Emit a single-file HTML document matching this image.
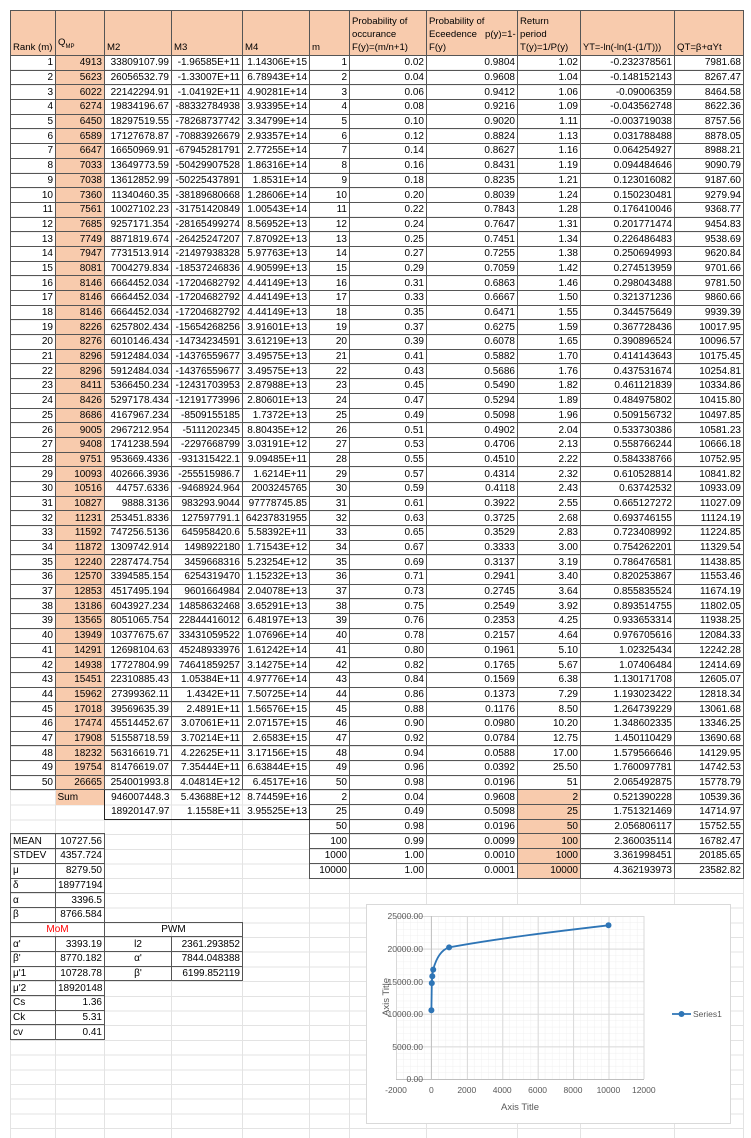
<!DOCTYPE html>
<html><head><meta charset="utf-8"><style>
*{margin:0;padding:0;box-sizing:border-box}
body{width:751px;height:1138px;overflow:hidden;background:#fff;position:relative;font-family:"Liberation Sans",sans-serif;font-size:10px;color:#000}
.gl{position:absolute;left:10px;top:55px;width:733px;height:1083px;background:repeating-linear-gradient(to bottom,#e3e3e3 0,#e3e3e3 1px,transparent 1px,transparent 14.7px)}
.vl{position:absolute;top:10px;height:1128px;width:1px;background:#e3e3e3}
table{position:absolute;left:10px;top:10px;border-collapse:collapse;table-layout:fixed;width:733px}
td{border:none;padding:0 2px;height:14.7px;line-height:13px;white-space:nowrap;overflow:hidden;text-align:right;background:transparent}
td:nth-child(6){text-align:right}
tr.h td{height:45px;vertical-align:bottom;text-align:left;background:#f8cbad;border:1px solid #555;line-height:13px;white-space:nowrap;padding:0 1px 1px 2px;font-size:9.6px}
.b td,td.b{border:1px solid #555}
.p{background:#f8cbad}
.l{text-align:left}
.c{text-align:center}
</style></head><body>
<div class="gl"></div>
<div class="vl" style="left:10px"></div><div class="vl" style="left:55px"></div><div class="vl" style="left:104px"></div><div class="vl" style="left:171px"></div><div class="vl" style="left:242px"></div><div class="vl" style="left:309px"></div><div class="vl" style="left:349px"></div><div class="vl" style="left:426px"></div><div class="vl" style="left:517px"></div><div class="vl" style="left:580px"></div><div class="vl" style="left:674px"></div><div class="vl" style="left:743px"></div>
<table>
<colgroup><col style="width:45px"><col style="width:49px"><col style="width:67px"><col style="width:71px"><col style="width:67px"><col style="width:40px"><col style="width:77px"><col style="width:91px"><col style="width:63px"><col style="width:94px"><col style="width:69px"></colgroup>
<tr class="h"><td>Rank (m)</td><td>Q<sub style="font-size:6px">MP</sub></td><td>M2</td><td>M3</td><td>M4</td><td>m</td><td>Probability of<br>occurance<br>F(y)=(m/n+1)</td><td>Probability of<br>Eceedence&nbsp;&nbsp; p(y)=1-<br>F(y)</td><td>Return<br>period<br>T(y)=1/P(y)</td><td style="font-size:9.3px">YT=-ln(-ln(1-(1/T)))</td><td>QT=β+αYt</td></tr>
<tr class="b"><td>1</td><td class="p">4913</td><td>33809107.99</td><td>-1.96585E+11</td><td>1.14306E+15</td><td>1</td><td>0.02</td><td>0.9804</td><td>1.02</td><td>-0.232378561</td><td>7981.68</td></tr>
<tr class="b"><td>2</td><td class="p">5623</td><td>26056532.79</td><td>-1.33007E+11</td><td>6.78943E+14</td><td>2</td><td>0.04</td><td>0.9608</td><td>1.04</td><td>-0.148152143</td><td>8267.47</td></tr>
<tr class="b"><td>3</td><td class="p">6022</td><td>22142294.91</td><td>-1.04192E+11</td><td>4.90281E+14</td><td>3</td><td>0.06</td><td>0.9412</td><td>1.06</td><td>-0.09006359</td><td>8464.58</td></tr>
<tr class="b"><td>4</td><td class="p">6274</td><td>19834196.67</td><td>-88332784938</td><td>3.93395E+14</td><td>4</td><td>0.08</td><td>0.9216</td><td>1.09</td><td>-0.043562748</td><td>8622.36</td></tr>
<tr class="b"><td>5</td><td class="p">6450</td><td>18297519.55</td><td>-78268737742</td><td>3.34799E+14</td><td>5</td><td>0.10</td><td>0.9020</td><td>1.11</td><td>-0.003719038</td><td>8757.56</td></tr>
<tr class="b"><td>6</td><td class="p">6589</td><td>17127678.87</td><td>-70883926679</td><td>2.93357E+14</td><td>6</td><td>0.12</td><td>0.8824</td><td>1.13</td><td>0.031788488</td><td>8878.05</td></tr>
<tr class="b"><td>7</td><td class="p">6647</td><td>16650969.91</td><td>-67945281791</td><td>2.77255E+14</td><td>7</td><td>0.14</td><td>0.8627</td><td>1.16</td><td>0.064254927</td><td>8988.21</td></tr>
<tr class="b"><td>8</td><td class="p">7033</td><td>13649773.59</td><td>-50429907528</td><td>1.86316E+14</td><td>8</td><td>0.16</td><td>0.8431</td><td>1.19</td><td>0.094484646</td><td>9090.79</td></tr>
<tr class="b"><td>9</td><td class="p">7038</td><td>13612852.99</td><td>-50225437891</td><td>1.8531E+14</td><td>9</td><td>0.18</td><td>0.8235</td><td>1.21</td><td>0.123016082</td><td>9187.60</td></tr>
<tr class="b"><td>10</td><td class="p">7360</td><td>11340460.35</td><td>-38189680668</td><td>1.28606E+14</td><td>10</td><td>0.20</td><td>0.8039</td><td>1.24</td><td>0.150230481</td><td>9279.94</td></tr>
<tr class="b"><td>11</td><td class="p">7561</td><td>10027102.23</td><td>-31751420849</td><td>1.00543E+14</td><td>11</td><td>0.22</td><td>0.7843</td><td>1.28</td><td>0.176410046</td><td>9368.77</td></tr>
<tr class="b"><td>12</td><td class="p">7685</td><td>9257171.354</td><td>-28165499274</td><td>8.56952E+13</td><td>12</td><td>0.24</td><td>0.7647</td><td>1.31</td><td>0.201771474</td><td>9454.83</td></tr>
<tr class="b"><td>13</td><td class="p">7749</td><td>8871819.674</td><td>-26425247207</td><td>7.87092E+13</td><td>13</td><td>0.25</td><td>0.7451</td><td>1.34</td><td>0.226486483</td><td>9538.69</td></tr>
<tr class="b"><td>14</td><td class="p">7947</td><td>7731513.914</td><td>-21497938328</td><td>5.97763E+13</td><td>14</td><td>0.27</td><td>0.7255</td><td>1.38</td><td>0.250694993</td><td>9620.84</td></tr>
<tr class="b"><td>15</td><td class="p">8081</td><td>7004279.834</td><td>-18537246836</td><td>4.90599E+13</td><td>15</td><td>0.29</td><td>0.7059</td><td>1.42</td><td>0.274513959</td><td>9701.66</td></tr>
<tr class="b"><td>16</td><td class="p">8146</td><td>6664452.034</td><td>-17204682792</td><td>4.44149E+13</td><td>16</td><td>0.31</td><td>0.6863</td><td>1.46</td><td>0.298043488</td><td>9781.50</td></tr>
<tr class="b"><td>17</td><td class="p">8146</td><td>6664452.034</td><td>-17204682792</td><td>4.44149E+13</td><td>17</td><td>0.33</td><td>0.6667</td><td>1.50</td><td>0.321371236</td><td>9860.66</td></tr>
<tr class="b"><td>18</td><td class="p">8146</td><td>6664452.034</td><td>-17204682792</td><td>4.44149E+13</td><td>18</td><td>0.35</td><td>0.6471</td><td>1.55</td><td>0.344575649</td><td>9939.39</td></tr>
<tr class="b"><td>19</td><td class="p">8226</td><td>6257802.434</td><td>-15654268256</td><td>3.91601E+13</td><td>19</td><td>0.37</td><td>0.6275</td><td>1.59</td><td>0.367728436</td><td>10017.95</td></tr>
<tr class="b"><td>20</td><td class="p">8276</td><td>6010146.434</td><td>-14734234591</td><td>3.61219E+13</td><td>20</td><td>0.39</td><td>0.6078</td><td>1.65</td><td>0.390896524</td><td>10096.57</td></tr>
<tr class="b"><td>21</td><td class="p">8296</td><td>5912484.034</td><td>-14376559677</td><td>3.49575E+13</td><td>21</td><td>0.41</td><td>0.5882</td><td>1.70</td><td>0.414143643</td><td>10175.45</td></tr>
<tr class="b"><td>22</td><td class="p">8296</td><td>5912484.034</td><td>-14376559677</td><td>3.49575E+13</td><td>22</td><td>0.43</td><td>0.5686</td><td>1.76</td><td>0.437531674</td><td>10254.81</td></tr>
<tr class="b"><td>23</td><td class="p">8411</td><td>5366450.234</td><td>-12431703953</td><td>2.87988E+13</td><td>23</td><td>0.45</td><td>0.5490</td><td>1.82</td><td>0.461121839</td><td>10334.86</td></tr>
<tr class="b"><td>24</td><td class="p">8426</td><td>5297178.434</td><td>-12191773996</td><td>2.80601E+13</td><td>24</td><td>0.47</td><td>0.5294</td><td>1.89</td><td>0.484975802</td><td>10415.80</td></tr>
<tr class="b"><td>25</td><td class="p">8686</td><td>4167967.234</td><td>-8509155185</td><td>1.7372E+13</td><td>25</td><td>0.49</td><td>0.5098</td><td>1.96</td><td>0.509156732</td><td>10497.85</td></tr>
<tr class="b"><td>26</td><td class="p">9005</td><td>2967212.954</td><td>-5111202345</td><td>8.80435E+12</td><td>26</td><td>0.51</td><td>0.4902</td><td>2.04</td><td>0.533730386</td><td>10581.23</td></tr>
<tr class="b"><td>27</td><td class="p">9408</td><td>1741238.594</td><td>-2297668799</td><td>3.03191E+12</td><td>27</td><td>0.53</td><td>0.4706</td><td>2.13</td><td>0.558766244</td><td>10666.18</td></tr>
<tr class="b"><td>28</td><td class="p">9751</td><td>953669.4336</td><td>-931315422.1</td><td>9.09485E+11</td><td>28</td><td>0.55</td><td>0.4510</td><td>2.22</td><td>0.584338766</td><td>10752.95</td></tr>
<tr class="b"><td>29</td><td class="p">10093</td><td>402666.3936</td><td>-255515986.7</td><td>1.6214E+11</td><td>29</td><td>0.57</td><td>0.4314</td><td>2.32</td><td>0.610528814</td><td>10841.82</td></tr>
<tr class="b"><td>30</td><td class="p">10516</td><td>44757.6336</td><td>-9468924.964</td><td>2003245765</td><td>30</td><td>0.59</td><td>0.4118</td><td>2.43</td><td>0.63742532</td><td>10933.09</td></tr>
<tr class="b"><td>31</td><td class="p">10827</td><td>9888.3136</td><td>983293.9044</td><td>97778745.85</td><td>31</td><td>0.61</td><td>0.3922</td><td>2.55</td><td>0.665127272</td><td>11027.09</td></tr>
<tr class="b"><td>32</td><td class="p">11231</td><td>253451.8336</td><td>127597791.1</td><td>64237831955</td><td>32</td><td>0.63</td><td>0.3725</td><td>2.68</td><td>0.693746155</td><td>11124.19</td></tr>
<tr class="b"><td>33</td><td class="p">11592</td><td>747256.5136</td><td>645958420.6</td><td>5.58392E+11</td><td>33</td><td>0.65</td><td>0.3529</td><td>2.83</td><td>0.723408992</td><td>11224.85</td></tr>
<tr class="b"><td>34</td><td class="p">11872</td><td>1309742.914</td><td>1498922180</td><td>1.71543E+12</td><td>34</td><td>0.67</td><td>0.3333</td><td>3.00</td><td>0.754262201</td><td>11329.54</td></tr>
<tr class="b"><td>35</td><td class="p">12240</td><td>2287474.754</td><td>3459668316</td><td>5.23254E+12</td><td>35</td><td>0.69</td><td>0.3137</td><td>3.19</td><td>0.786476581</td><td>11438.85</td></tr>
<tr class="b"><td>36</td><td class="p">12570</td><td>3394585.154</td><td>6254319470</td><td>1.15232E+13</td><td>36</td><td>0.71</td><td>0.2941</td><td>3.40</td><td>0.820253867</td><td>11553.46</td></tr>
<tr class="b"><td>37</td><td class="p">12853</td><td>4517495.194</td><td>9601664984</td><td>2.04078E+13</td><td>37</td><td>0.73</td><td>0.2745</td><td>3.64</td><td>0.855835524</td><td>11674.19</td></tr>
<tr class="b"><td>38</td><td class="p">13186</td><td>6043927.234</td><td>14858632468</td><td>3.65291E+13</td><td>38</td><td>0.75</td><td>0.2549</td><td>3.92</td><td>0.893514755</td><td>11802.05</td></tr>
<tr class="b"><td>39</td><td class="p">13565</td><td>8051065.754</td><td>22844416012</td><td>6.48197E+13</td><td>39</td><td>0.76</td><td>0.2353</td><td>4.25</td><td>0.933653314</td><td>11938.25</td></tr>
<tr class="b"><td>40</td><td class="p">13949</td><td>10377675.67</td><td>33431059522</td><td>1.07696E+14</td><td>40</td><td>0.78</td><td>0.2157</td><td>4.64</td><td>0.976705616</td><td>12084.33</td></tr>
<tr class="b"><td>41</td><td class="p">14291</td><td>12698104.63</td><td>45248933976</td><td>1.61242E+14</td><td>41</td><td>0.80</td><td>0.1961</td><td>5.10</td><td>1.02325434</td><td>12242.28</td></tr>
<tr class="b"><td>42</td><td class="p">14938</td><td>17727804.99</td><td>74641859257</td><td>3.14275E+14</td><td>42</td><td>0.82</td><td>0.1765</td><td>5.67</td><td>1.07406484</td><td>12414.69</td></tr>
<tr class="b"><td>43</td><td class="p">15451</td><td>22310885.43</td><td>1.05384E+11</td><td>4.97776E+14</td><td>43</td><td>0.84</td><td>0.1569</td><td>6.38</td><td>1.130171708</td><td>12605.07</td></tr>
<tr class="b"><td>44</td><td class="p">15962</td><td>27399362.11</td><td>1.4342E+11</td><td>7.50725E+14</td><td>44</td><td>0.86</td><td>0.1373</td><td>7.29</td><td>1.193023422</td><td>12818.34</td></tr>
<tr class="b"><td>45</td><td class="p">17018</td><td>39569635.39</td><td>2.4891E+11</td><td>1.56576E+15</td><td>45</td><td>0.88</td><td>0.1176</td><td>8.50</td><td>1.264739229</td><td>13061.68</td></tr>
<tr class="b"><td>46</td><td class="p">17474</td><td>45514452.67</td><td>3.07061E+11</td><td>2.07157E+15</td><td>46</td><td>0.90</td><td>0.0980</td><td>10.20</td><td>1.348602335</td><td>13346.25</td></tr>
<tr class="b"><td>47</td><td class="p">17908</td><td>51558718.59</td><td>3.70214E+11</td><td>2.6583E+15</td><td>47</td><td>0.92</td><td>0.0784</td><td>12.75</td><td>1.450110429</td><td>13690.68</td></tr>
<tr class="b"><td>48</td><td class="p">18232</td><td>56316619.71</td><td>4.22625E+11</td><td>3.17156E+15</td><td>48</td><td>0.94</td><td>0.0588</td><td>17.00</td><td>1.579566646</td><td>14129.95</td></tr>
<tr class="b"><td>49</td><td class="p">19754</td><td>81476619.07</td><td>7.35444E+11</td><td>6.63844E+15</td><td>49</td><td>0.96</td><td>0.0392</td><td>25.50</td><td>1.760097781</td><td>14742.53</td></tr>
<tr class="b"><td>50</td><td class="p">26665</td><td>254001993.8</td><td>4.04814E+12</td><td>6.4517E+16</td><td>50</td><td>0.98</td><td>0.0196</td><td>51</td><td>2.065492875</td><td>15778.79</td></tr>
<tr><td></td><td class="p l">Sum</td><td style="border-top:1px solid #222;border-left:1px solid #222">946007448.3</td><td style="border-top:1px solid #222">5.43688E+12</td><td style="border-top:1px solid #222;border-right:1px solid #222">8.74459E+16</td><td class="b">2</td><td class="b">0.04</td><td class="b">0.9608</td><td class="b p">2</td><td class="b">0.521390228</td><td class="b">10539.36</td></tr>
<tr><td></td><td></td><td style="border-bottom:1px solid #222;border-left:1px solid #222">18920147.97</td><td style="border-bottom:1px solid #222">1.1558E+11</td><td style="border-bottom:1px solid #222;border-right:1px solid #222">3.95525E+13</td><td class="b">25</td><td class="b">0.49</td><td class="b">0.5098</td><td class="b p">25</td><td class="b">1.751321469</td><td class="b">14714.97</td></tr>
<tr><td></td><td></td><td></td><td></td><td></td><td class="b">50</td><td class="b">0.98</td><td class="b">0.0196</td><td class="b p">50</td><td class="b">2.056806117</td><td class="b">15752.55</td></tr>
<tr><td class="b l">MEAN</td><td class="b">10727.56</td><td></td><td></td><td></td><td class="b">100</td><td class="b">0.99</td><td class="b">0.0099</td><td class="b p">100</td><td class="b">2.360035114</td><td class="b">16782.47</td></tr>
<tr><td class="b l">STDEV</td><td class="b">4357.724</td><td></td><td></td><td></td><td class="b">1000</td><td class="b">1.00</td><td class="b">0.0010</td><td class="b p">1000</td><td class="b">3.361998451</td><td class="b">20185.65</td></tr>
<tr><td class="b l">μ</td><td class="b">8279.50</td><td></td><td></td><td></td><td class="b">10000</td><td class="b">1.00</td><td class="b">0.0001</td><td class="b p">10000</td><td class="b">4.362193973</td><td class="b">23582.82</td></tr>
<tr><td class="b l">δ</td><td class="b">18977194</td><td colspan="9"></td></tr>
<tr><td class="b l">α</td><td class="b">3396.5</td><td colspan="9"></td></tr>
<tr><td class="b l">β</td><td class="b">8766.584</td><td colspan="9"></td></tr>
<tr><td class="b c" colspan="2" style="color:#f00">MoM</td><td class="b c" colspan="2">PWM</td><td colspan="7"></td></tr>
<tr><td class="b l">α'</td><td class="b">3393.19</td><td class="b c">l2</td><td class="b">2361.293852</td><td colspan="7"></td></tr>
<tr><td class="b l">β'</td><td class="b">8770.182</td><td class="b c">α'</td><td class="b">7844.048388</td><td colspan="7"></td></tr>
<tr><td class="b l">μ'1</td><td class="b">10728.78</td><td class="b c">β'</td><td class="b">6199.852119</td><td colspan="7"></td></tr>
<tr><td class="b l">μ'2</td><td class="b">18920148</td><td colspan="9"></td></tr>
<tr><td class="b l">Cs</td><td class="b">1.36</td><td colspan="9"></td></tr>
<tr><td class="b l">Ck</td><td class="b">5.31</td><td colspan="9"></td></tr>
<tr><td class="b l">cv</td><td class="b">0.41</td><td colspan="9"></td></tr>
</table>
<svg style="position:absolute;left:0;top:0" width="751" height="1138">
<defs>
<pattern id="mn" x="396" y="916" width="7.086" height="6.52" patternUnits="userSpaceOnUse"><path d="M0 0V6.52M0 0H7.086" stroke="#efefef" stroke-width="1" fill="none"/></pattern>
</defs>
<rect x="366.5" y="904.5" width="364" height="219" fill="#fff" stroke="#d9d9d9"/>
<rect x="396" y="916" width="248" height="163" fill="url(#mn)"/>
<g stroke="#d9d9d9" stroke-width="1">
<path d="M396.5 916V1079M467.4 916V1079M502.8 916V1079M538.2 916V1079M573.6 916V1079M609 916V1079M644 916V1079"/>
<path d="M396 916.5H644M396 949.1H644M396 981.7H644M396 1014.3H644M396 1046.9H644"/>
</g>
<path d="M431.4 916V1079M396 1079.5H644" stroke="#bfbfbf"/>
<path d="M431.4 1010.3L431.8 983.1C432 980 432.1 978 432.3 976.3C432.6 973 432.9 971 433.2 969.6C436 959 441 950 449.1 947.4C500 938 560 931 608.5 925.3" stroke="#2e75b6" stroke-width="1.8" fill="none"/>
<g fill="#2e75b6"><circle cx="431.4" cy="1010.3" r="3"/><circle cx="431.8" cy="983.1" r="3"/><circle cx="432.3" cy="976.3" r="3"/><circle cx="433.2" cy="969.6" r="3"/><circle cx="449.1" cy="947.4" r="3"/><circle cx="608.5" cy="925.3" r="3"/></g>
<g font-family="Liberation Sans,sans-serif" font-size="8.5" fill="#595959" text-anchor="end">
<text x="423" y="919">25000.00</text><text x="423" y="952">20000.00</text><text x="423" y="985">15000.00</text><text x="423" y="1017">10000.00</text><text x="423" y="1050">5000.00</text><text x="423" y="1082">0.00</text>
</g>
<g font-family="Liberation Sans,sans-serif" font-size="8.5" fill="#595959" text-anchor="middle">
<text x="396" y="1093">-2000</text><text x="431.4" y="1093">0</text><text x="466.8" y="1093">2000</text><text x="502.2" y="1093">4000</text><text x="537.6" y="1093">6000</text><text x="573" y="1093">8000</text><text x="608.4" y="1093">10000</text><text x="643.8" y="1093">12000</text>
<text x="520" y="1110" font-size="9.5">Axis Title</text>
<text x="0" y="0" font-size="9.5" transform="translate(389,997) rotate(-90)">Axis Title</text>
</g>
<path d="M672 1014H691" stroke="#2e75b6" stroke-width="1.8"/><circle cx="681.5" cy="1014" r="3" fill="#2e75b6"/>
<text x="693" y="1017" font-family="Liberation Sans,sans-serif" font-size="8.5" fill="#595959">Series1</text>
</svg>
</body></html>
